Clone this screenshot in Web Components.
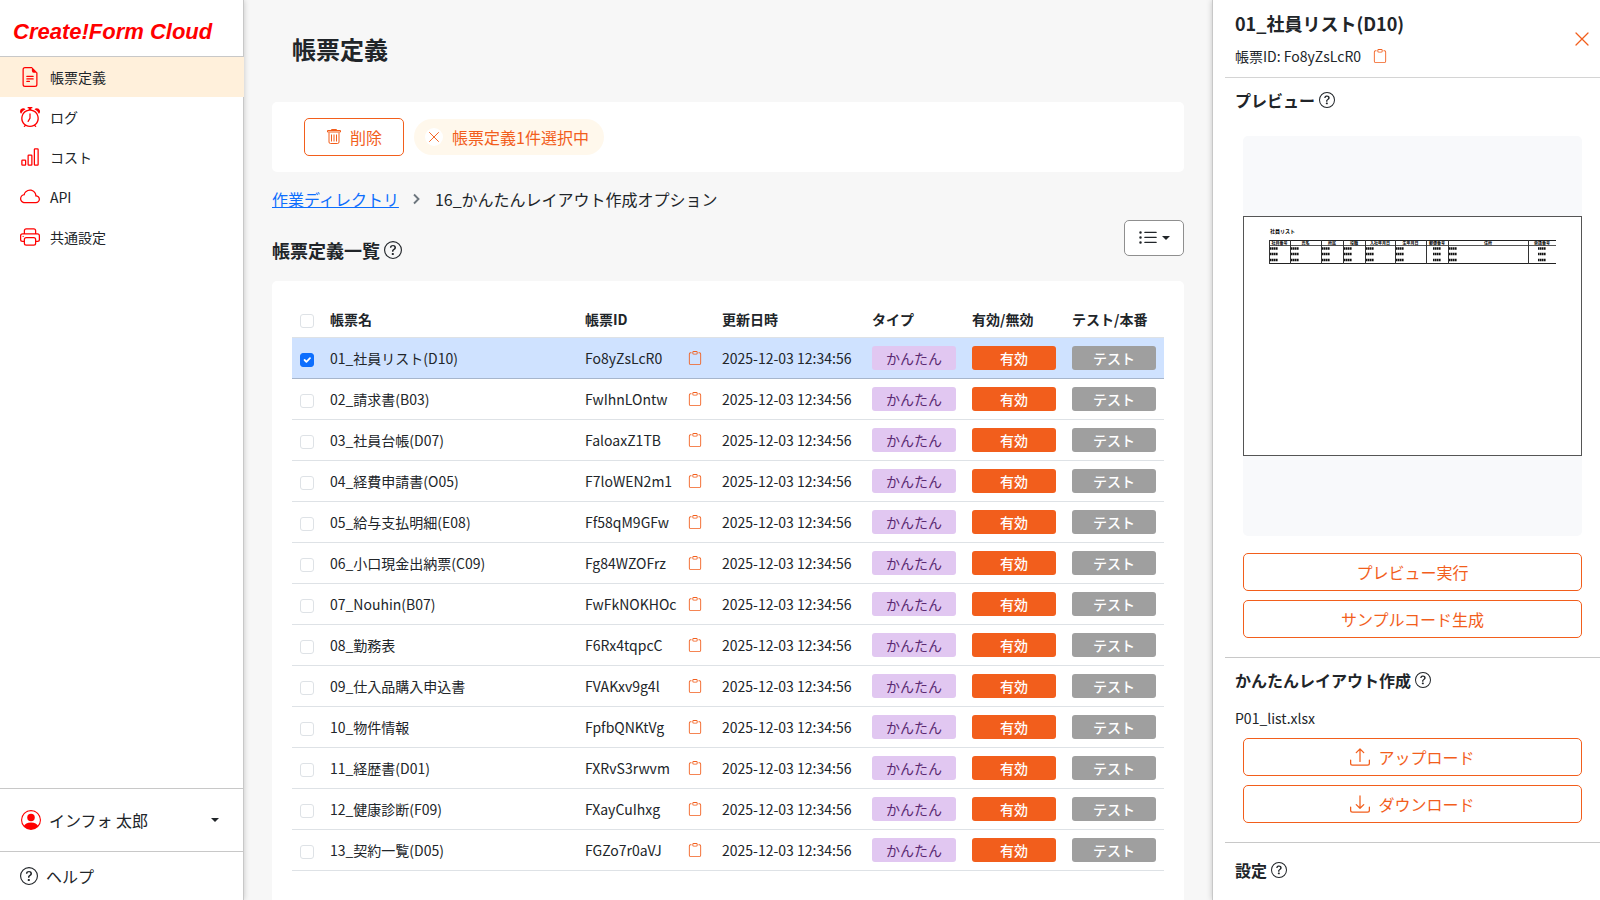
<!DOCTYPE html>
<html lang="ja">
<head>
<meta charset="utf-8">
<meta name="viewport" content="width=device-width, initial-scale=1">
<title>帳票定義 - Create!Form Cloud</title>
<style>
  html, body { margin: 0; height: 100%; }
  body {
    --accent: #f25e1c;
    --brand: #ff0000;
    --line: #c8c8c8;
    font-family: "Noto Sans CJK JP", "Noto Sans", sans-serif;
    font-size: 14px;
    line-height: 20px;
    color: #212529;
    background: #f7f7f7;
  }
</style>
</head>
<body>
<app-shell>
  <side-bar slot="side">
    <nav-item icon="file" active>帳票定義</nav-item>
    <nav-item icon="alarm">ログ</nav-item>
    <nav-item icon="chart">コスト</nav-item>
    <nav-item icon="cloud">API</nav-item>
    <nav-item icon="printer">共通設定</nav-item>
    <user-menu slot="foot">インフォ 太郎</user-menu>
    <help-link slot="foot">ヘルプ</help-link>
  </side-bar>
  <form-page slot="main"></form-page>
  <detail-panel slot="panel" name="01_社員リスト(D10)" form-id="Fo8yZsLcR0"></detail-panel>
</app-shell>

<script>
const ICONS = {
  file: '<path d="M5.5 7a.5.5 0 0 0 0 1h5a.5.5 0 0 0 0-1zM5 9.5a.5.5 0 0 1 .5-.5h5a.5.5 0 0 1 0 1h-5a.5.5 0 0 1-.5-.5m0 2a.5.5 0 0 1 .5-.5h2a.5.5 0 0 1 0 1h-2a.5.5 0 0 1-.5-.5"/><path d="M9.5 0H4a2 2 0 0 0-2 2v12a2 2 0 0 0 2 2h8a2 2 0 0 0 2-2V4.500zm0 1v2A1.5 1.5 0 0 0 11 4.500h2V14a1 1 0 0 1-1 1H4a1 1 0 0 1-1-1V2a1 1 0 0 1 1-1z"/>',
  alarm: '<path d="M8.5 5.5a.5.5 0 0 0-1 0v3.362l-1.429 2.38a.5.5 0 1 0 .858.515l1.5-2.5A.5.5 0 0 0 8.5 9z"/><path d="M6.5 0a.5.5 0 0 0 0 1H7v1.070a7.001 7.001 0 0 0-3.273 12.474l-.602.602a.5.5 0 0 0 .707.708l.746-.746A6.970 6.970 0 0 0 8 16a6.970 6.970 0 0 0 3.422-.892l.746.746a.5.5 0 0 0 .707-.708l-.601-.602A7.001 7.001 0 0 0 9 2.070V1h.5a.5.5 0 0 0 0-1zm1.038 3.018a6 6 0 0 1 .924 0 6 6 0 1 1-.924 0M0 3.500c0 .753.333 1.429.860 1.887A8.040 8.040 0 0 1 4.387 1.860 2.500 2.500 0 0 0 0 3.500M13.500 1c-.753 0-1.429.333-1.887.860a8.040 8.040 0 0 1 3.527 3.527A2.500 2.500 0 0 0 13.500 1"/>',
  chart: '<path d="M4 11H2v3h2zm5-4H7v7h2zm5-5v12h-2V2zm-2-1a1 1 0 0 0-1 1v12a1 1 0 0 0 1 1h2a1 1 0 0 0 1-1V2a1 1 0 0 0-1-1zM6 7a1 1 0 0 1 1-1h2a1 1 0 0 1 1 1v7a1 1 0 0 1-1 1H7a1 1 0 0 1-1-1zm-5 4a1 1 0 0 1 1-1h2a1 1 0 0 1 1 1v3a1 1 0 0 1-1 1H2a1 1 0 0 1-1-1z"/>',
  cloud: '<path d="M4.406 3.342A5.530 5.530 0 0 1 8 2c2.690 0 4.923 2 5.166 4.579C14.758 6.804 16 8.137 16 9.773 16 11.569 14.502 13 12.687 13H3.781C1.708 13 0 11.366 0 9.318c0-1.763 1.266-3.223 2.942-3.593.143-.863.698-1.723 1.464-2.383m.653.757c-.757.653-1.153 1.440-1.153 2.056v.448l-.445.049C2.064 6.805 1 7.952 1 9.318 1 10.785 2.230 12 3.781 12h8.906C13.980 12 15 10.988 15 9.773c0-1.216-1.020-2.228-2.313-2.228h-.5v-.5C12.188 4.825 10.328 3 8 3a4.530 4.530 0 0 0-2.941 1.100z"/>',
  printer: '<path d="M2.5 8a.5.5 0 1 0 0-1 .5.5 0 0 0 0 1"/><path d="M5 1a2 2 0 0 0-2 2v2H2a2 2 0 0 0-2 2v3a2 2 0 0 0 2 2h1v1a2 2 0 0 0 2 2h6a2 2 0 0 0 2-2v-1h1a2 2 0 0 0 2-2V7a2 2 0 0 0-2-2h-1V3a2 2 0 0 0-2-2zM4 3a1 1 0 0 1 1-1h6a1 1 0 0 1 1 1v2H4zm1 5a2 2 0 0 0-2 2v1H2a1 1 0 0 1-1-1V7a1 1 0 0 1 1-1h12a1 1 0 0 1 1 1v3a1 1 0 0 1-1 1h-1v-1a2 2 0 0 0-2-2zm7 2v3a1 1 0 0 1-1 1H5a1 1 0 0 1-1-1v-3a1 1 0 0 1 1-1h6a1 1 0 0 1 1 1"/>',
  person: '<path d="M11 6a3 3 0 1 1-6 0 3 3 0 0 1 6 0"/><path fill-rule="evenodd" d="M0 8a8 8 0 1 1 16 0A8 8 0 0 1 0 8m8-7a7 7 0 0 0-5.468 11.370C3.242 11.226 4.805 10 8 10s4.757 1.225 5.468 2.370A7 7 0 0 0 8 1"/>',
  help: '<path d="M8 15A7 7 0 1 1 8 1a7 7 0 0 1 0 14m0 1A8 8 0 1 0 8 0a8 8 0 0 0 0 16"/><path d="M5.255 5.786a.237.237 0 0 0 .241.247h.825c.138 0 .248-.113.266-.250.090-.656.540-1.134 1.342-1.134.686 0 1.314.343 1.314 1.168 0 .635-.374.927-.965 1.371-.673.489-1.206 1.060-1.168 1.987l.003.217a.250.250 0 0 0 .250.246h.811a.250.250 0 0 0 .250-.250v-.105c0-.718.273-.927 1.010-1.486.609-.463 1.244-.977 1.244-2.056 0-1.511-1.276-2.241-2.673-2.241-1.267 0-2.655.590-2.750 2.286m1.557 5.763c0 .533.425.927 1.010.927.609 0 1.028-.394 1.028-.927 0-.552-.420-.940-1.029-.940-.584 0-1.009.388-1.009.940"/>',
  clipboard: '<path d="M4 1.500H3a2 2 0 0 0-2 2V14a2 2 0 0 0 2 2h10a2 2 0 0 0 2-2V3.500a2 2 0 0 0-2-2h-1v1h1a1 1 0 0 1 1 1V14a1 1 0 0 1-1 1H3a1 1 0 0 1-1-1V3.500a1 1 0 0 1 1-1h1z"/><path d="M9.500 1a.5.5 0 0 1 .5.5v1a.5.5 0 0 1-.5.5h-3a.5.5 0 0 1-.5-.5v-1a.5.5 0 0 1 .5-.5zm-3-1A1.500 1.500 0 0 0 5 1.500v1A1.500 1.500 0 0 0 6.500 4h3A1.500 1.500 0 0 0 11 2.500v-1A1.500 1.500 0 0 0 9.500 0z"/>',
  list: '<path fill-rule="evenodd" d="M5 11.500a.5.5 0 0 1 .5-.5h9a.5.5 0 0 1 0 1h-9a.5.5 0 0 1-.5-.5m0-4a.5.5 0 0 1 .5-.5h9a.5.5 0 0 1 0 1h-9a.5.5 0 0 1-.5-.5m0-4a.5.5 0 0 1 .5-.5h9a.5.5 0 0 1 0 1h-9a.5.5 0 0 1-.5-.5m-3 1a1 1 0 1 0 0-2 1 1 0 0 0 0 2m0 4a1 1 0 1 0 0-2 1 1 0 0 0 0 2m0 4a1 1 0 1 0 0-2 1 1 0 0 0 0 2"/>',
  upload: '<path d="M.5 9.900a.5.5 0 0 1 .5.5v2.500a1 1 0 0 0 1 1h12a1 1 0 0 0 1-1v-2.500a.5.5 0 0 1 1 0v2.500a2 2 0 0 1-2 2H2a2 2 0 0 1-2-2v-2.500a.5.5 0 0 1 .5-.5"/><path d="M7.646 1.146a.5.5 0 0 1 .708 0l3 3a.5.5 0 0 1-.708.708L8.500 2.707V11.500a.5.5 0 0 1-1 0V2.707L5.354 4.854a.5.5 0 1 1-.708-.708z"/>',
  download: '<path d="M.5 9.900a.5.5 0 0 1 .5.5v2.500a1 1 0 0 0 1 1h12a1 1 0 0 0 1-1v-2.500a.5.5 0 0 1 1 0v2.500a2 2 0 0 1-2 2H2a2 2 0 0 1-2-2v-2.500a.5.5 0 0 1 .5-.5"/><path d="M7.646 11.854a.5.5 0 0 0 .708 0l3-3a.5.5 0 0 0-.708-.708L8.500 10.293V1.500a.5.5 0 0 0-1 0v8.793L5.354 8.146a.5.5 0 1 0-.708.708z"/>',
  trash: '<g fill="none" stroke="currentColor"><path d="M1.500 1.500h13v1.500h-13zM5.500 1.500v-1h5v1M3 3.500v9.500a1.500 1.500 0 0 0 1.500 1.500h7a1.500 1.500 0 0 0 1.500-1.500V3.500M5.500 5.500v7M8 5.500v7M10.500 5.500v7"/></g>',
  cross: '<path fill="none" stroke="currentColor" stroke-width="1.250" stroke-linecap="round" d="M2 2l12 12M14 2L2 14"/>',
  chevron: '<path fill="none" stroke="currentColor" stroke-width="2.500" d="M4 2l6 6-6 6"/>'
};

/* Defines an element whose shadow root is rendered from the given function. */
function define(tag, render) {
  customElements.define(tag, class extends HTMLElement {
    constructor() { super(); this.attachShadow({ mode: 'open' }); }
    connectedCallback() {
      const t = document.createElement('template');
      t.innerHTML = render(this);
      this.shadowRoot.replaceChildren(t.content.cloneNode(true));
    }
  });
}

define('ui-icon', el => `
  <style>
    :host { display: inline-flex; flex: none; width: var(--size, 16px); height: var(--size, 16px); }
    svg { width: 100%; height: 100%; display: block; }
  </style>
  <svg viewBox="0 0 16 16" fill="currentColor" aria-hidden="true">${ICONS[el.getAttribute('name')]}</svg>`);

define('app-shell', () => `
  <style>
    :host { display: grid; grid-template-columns: 244px minmax(0, 1fr) 388px; height: 100vh; overflow: hidden; }
    ::slotted(*) { min-width: 0; min-height: 0; }
  </style>
  <slot name="side"></slot><slot name="main"></slot><slot name="panel"></slot>`);

define('side-bar', () => `
  <style>
    :host { display: flex; flex-direction: column; background: #fff; border-right: 1px solid var(--line); box-shadow: 0 0 6px rgba(0,0,0,.2); z-index: 1; }
    .logo { display: flex; align-items: center; height: 57px; box-sizing: border-box; padding: 8px 0 0 13px; border-bottom: 1px solid var(--line);
      font: italic bold 22px/24px "Liberation Sans", Arial, sans-serif; color: var(--brand); text-decoration: none; white-space: nowrap; }
    nav { flex: 1; margin-right: -1px; }
  </style>
  <a class="logo" href="#">Create!Form Cloud</a>
  <nav><slot></slot></nav>
  <slot name="foot"></slot>`);

define('nav-item', el => `
  <style>
    :host { display: block; }
    a { display: flex; align-items: center; gap: 10px; height: 40px; padding: 0 20px; color: inherit; text-decoration: none; }
    :host([active]) a { background: #fff0db; }
    ui-icon { --size: 20px; color: var(--brand); }
  </style>
  <a href="#"><ui-icon name="${el.getAttribute('icon')}"></ui-icon><slot></slot></a>`);

define('user-menu', () => `
  <style>
    :host { display: block; border-top: 1px solid var(--line); }
    button { display: flex; align-items: center; gap: 8px; width: 100%; height: 62px; padding: 0 24px 0 21px; border: 0; background: none; font: inherit; font-size: 16px; color: inherit; }
    ui-icon { --size: 20px; color: var(--brand); }
    i { margin-left: auto; border: 4px solid transparent; border-top-color: currentColor; border-bottom: 0; }
  </style>
  <button type="button"><ui-icon name="person"></ui-icon><slot></slot><i></i></button>`);

define('help-link', () => `
  <style>
    :host { display: block; border-top: 1px solid var(--line); }
    a { display: flex; align-items: center; gap: 8px; height: 48px; padding: 0 20px; font-size: 16px; color: inherit; text-decoration: none; }
    ui-icon { --size: 18px; }
  </style>
  <a href="#"><ui-icon name="help"></ui-icon><slot></slot></a>`);

define('outline-button', el => `
  <style>
    :host { display: block; }
    button { display: flex; align-items: center; justify-content: center; gap: 8px; width: 100%; height: 38px; padding: 0 20px; border: 1px solid var(--accent); border-radius: 5px; background: #fff; color: var(--accent); font: inherit; font-size: 16px; line-height: 24px; white-space: nowrap; }
  </style>
  <button type="button">${el.hasAttribute('icon') ? `<ui-icon name="${el.getAttribute('icon')}"></ui-icon>` : ''}<slot></slot></button>`);

define('copy-button', () => `
  <style>
    :host { display: inline-flex; }
    button { display: flex; padding: 0; border: 0; background: none; color: var(--accent); }
    ui-icon { --size: 14px; }
  </style>
  <button type="button" aria-label="コピー"><ui-icon name="clipboard"></ui-icon></button>`);

define('help-heading', () => `
  <style>
    :host { display: block; }
    h2 { display: flex; align-items: center; gap: 4px; margin: 0; font-size: inherit; line-height: 24px; font-weight: bold; }
    ui-icon { --size: 1em; }
  </style>
  <h2><slot></slot><ui-icon name="help"></ui-icon></h2>`);

define('selection-chip', () => `
  <style>
    :host { display: flex; align-items: center; gap: 9px; height: 36px; padding: 0 15px 0 11px; border-radius: 18px; background: #fff8ec; color: var(--accent); font-size: 16px; line-height: 24px; }
    button { display: grid; place-items: center; width: 18px; height: 18px; padding: 0; border: 0; border-radius: 9px; background: #fff; color: inherit; }
    ui-icon { --size: 12px; }
  </style>
  <button type="button" aria-label="選択解除"><ui-icon name="cross"></ui-icon></button><span><slot></slot></span>`);

const FORMS = [
  ['01_社員リスト(D10)', 'Fo8yZsLcR0'],
  ['02_請求書(B03)', 'FwIhnLOntw'],
  ['03_社員台帳(D07)', 'FaloaxZ1TB'],
  ['04_経費申請書(O05)', 'F7loWEN2m1'],
  ['05_給与支払明細(E08)', 'Ff58qM9GFw'],
  ['06_小口現金出納票(C09)', 'Fg84WZOFrz'],
  ['07_Nouhin(B07)', 'FwFkNOKHOc'],
  ['08_勤務表', 'F6Rx4tqpcC'],
  ['09_仕入品購入申込書', 'FVAKxv9g4l'],
  ['10_物件情報', 'FpfbQNKtVg'],
  ['11_経歴書(D01)', 'FXRvS3rwvm'],
  ['12_健康診断(F09)', 'FXayCuIhxg'],
  ['13_契約一覧(D05)', 'FGZo7r0aVJ']
];

define('form-table', () => `
  <style>
    :host { display: block; }
    table { width: 100%; table-layout: fixed; border-collapse: separate; border-spacing: 0; }
    th, td { height: 40px; padding: 0 8px; border-bottom: 1px solid #dee2e6; text-align: left; white-space: nowrap; }
    th { height: 36px; font-weight: bold; }
    tr.on td { background: #cfe2ff; border-bottom-color: #a6b5cc; }
    .check { width: 14px; } .id { width: 121px; } .date { width: 134px; } .tag { width: 84px; }
    input { display: block; appearance: none; width: 14px; height: 14px; margin: 4px 0 0; border: 1px solid #dee2e6; border-radius: 3px; background: #fff; }
    input:checked { border-color: #0d6efd; background: #0d6efd url("data:image/svg+xml,%3Csvg xmlns='http://www.w3.org/2000/svg' viewBox='0 0 20 20'%3E%3Cpath fill='none' stroke='%23fff' stroke-linecap='round' stroke-linejoin='round' stroke-width='3' d='m6 10 3 3 6-6'/%3E%3C/svg%3E") center / contain; }
    .pair { display: flex; align-items: center; justify-content: space-between; padding-right: 4px; }
    .badge { display: block; height: 24px; line-height: 24px; border-radius: 3px; text-align: center; font-weight: 500; color: #fff; }
    .easy { background: #e1c7f1; color: #5b2a72; font-weight: 400; }
    .live { background: var(--accent); }
    .test { background: #9f9f9f; }
  </style>
  <table>
    <thead><tr>
      <th class="check"><input type="checkbox" aria-label="すべて選択"></th>
      <th>帳票名</th><th class="id">帳票ID</th><th class="date">更新日時</th>
      <th class="tag">タイプ</th><th class="tag">有効/無効</th><th class="tag">テスト/本番</th>
    </tr></thead>
    <tbody>${FORMS.map(([name, id], i) => `
      <tr class="${i ? '' : 'on'}">
        <td><input type="checkbox" aria-label="${name}" ${i ? '' : 'checked'}></td>
        <td>${name}</td>
        <td><div class="pair"><span>${id}</span><copy-button></copy-button></div></td>
        <td>2025-12-03 12:34:56</td>
        <td><span class="badge easy">かんたん</span></td>
        <td><span class="badge live">有効</span></td>
        <td><span class="badge test">テスト</span></td>
      </tr>`).join('')}
    </tbody>
  </table>`);

define('form-page', () => `
  <style>
    :host { display: block; padding: 0 28px; overflow-y: auto; scrollbar-width: none; }
    h1 { margin: 0; padding: 31px 20px 35px; font-size: 24px; line-height: 36px; }
    .bar { display: flex; align-items: center; gap: 10px; padding: 16px 32px; border-radius: 5px; background: #fff; }
    .bar outline-button { width: 100px; }
    .crumbs { display: flex; align-items: center; gap: 12px; margin-top: 15px; font-size: 16px; line-height: 24px; }
    .crumbs a { color: #0d6efd; }
    .crumbs ui-icon { --size: 12px; color: #6c757d; }
    .head { display: flex; align-items: flex-start; justify-content: space-between; margin-top: 9px; }
    help-heading { padding-top: 18px; font-size: 18px; }
    .view { display: flex; align-items: center; justify-content: center; gap: 4px; width: 60px; height: 36px; padding: 0; border: 1px solid #8f8f8f; border-radius: 5px; background: #fff; color: #212529; }
    .view ui-icon { --size: 20px; }
    .view i { border: 4px solid transparent; border-top-color: currentColor; border-bottom: 0; }
    .card { margin-top: 19px; padding: 20px 20px 40px; border-radius: 5px; background: #fff; }
  </style>
  <h1>帳票定義</h1>
  <div class="bar"><outline-button icon="trash">削除</outline-button><selection-chip>帳票定義1件選択中</selection-chip></div>
  <nav class="crumbs"><a href="#">作業ディレクトリ</a><ui-icon name="chevron"></ui-icon><span>16_かんたんレイアウト作成オプション</span></nav>
  <div class="head">
    <help-heading>帳票定義一覧</help-heading>
    <button class="view" type="button" aria-label="表示切替"><ui-icon name="list"></ui-icon><i></i></button>
  </div>
  <div class="card"><form-table></form-table></div>`);

/* Thumbnail of the first page of the form: title, header row and three data rows. */
const COLS = [
  [25, 46, '社員番号'], [46, 77, '氏名'], [77, 99, '所属'], [99, 121, '役職'], [121, 151, '入社年月日'],
  [151, 182, '生年月日'], [182, 204, '郵便番号'], [204, 284, '住所'], [284, 312, '電話番号']
];
define('page-preview', () => `
  <style>
    :host { display: flex; align-items: center; height: 400px; border-radius: 5px; background: #f8f9fb; }
    svg { display: block; width: 100%; box-sizing: border-box; border: 1px solid #555; background: #fff; }
    text { font: bold 4px "Noto Sans CJK JP", sans-serif; fill: #000; }
    .title { font-size: 5px; }
  </style>
  <svg viewBox="0 0 337 238" role="img" aria-label="プレビュー">
    <text class="title" x="26" y="16">社員リスト</text>
    <path d="M25 23.500H312M25 46.500H312" stroke="#222" fill="none"/>
    <path d="M25 28.500H312" stroke="#555" fill="none"/>
    <path d="${COLS.map(c => `M${c[0] + .5} 23V47`).join('')}" stroke="#333" fill="none"/>
    ${COLS.map(([a, b, t]) => `<text x="${(a + b) / 2}" y="27.500" text-anchor="middle">${t}</text>`).join('')}
    ${[31.5, 37, 43].map(y => COLS.map(([a, b], i) => {
      const x = i === 6 || i === 8 ? (a + b) / 2 - 4 : a + 1;
      return `<path d="M${x} ${y}h8" stroke="#111" stroke-width="2.600" stroke-dasharray="1.600 .4"/>`;
    }).join('')).join('')}
  </svg>`);

define('detail-panel', el => `
  <style>
    :host { display: block; box-sizing: border-box; padding-left: 12px; background: #fff; border-left: 1px solid var(--line); box-shadow: 0 0 6px rgba(0,0,0,.2); overflow-y: auto; scrollbar-width: none; z-index: 1; }
    header { display: flex; align-items: center; justify-content: space-between; height: 78px; box-sizing: border-box; padding: 0 10px; border-bottom: 1px solid #d4d4d4; }
    h1 { margin: 0; padding-top: 2px; font-size: 18px; line-height: 28px; }
    .id { display: flex; align-items: center; gap: 12px; margin-top: 9px; line-height: 20px; padding-bottom: 4px; }
    .close { display: flex; padding: 0; border: 0; background: none; color: var(--accent); }
    section { padding: 10px 18px 19px; border-bottom: 1px solid var(--line); }
    section:last-child { border: 0; padding-top: 15px; }
    help-heading { margin-left: -8px; font-size: 16px; }
    page-preview { margin: 24px 0 17px; }
    outline-button { --size: 20px; }
    outline-button + outline-button { margin-top: 9px; }
    p { margin: 16px 0 10px -8px; line-height: 20px; }
  </style>
  <header>
    <div><h1>${el.getAttribute('name')}</h1><div class="id"><span>帳票ID: ${el.getAttribute('form-id')}</span><copy-button></copy-button></div></div>
    <button class="close" type="button" aria-label="閉じる"><ui-icon name="cross"></ui-icon></button>
  </header>
  <section>
    <help-heading>プレビュー</help-heading>
    <page-preview></page-preview>
    <outline-button>プレビュー実行</outline-button>
    <outline-button>サンプルコード生成</outline-button>
  </section>
  <section>
    <help-heading>かんたんレイアウト作成</help-heading>
    <p>P01_list.xlsx</p>
    <outline-button icon="upload">アップロード</outline-button>
    <outline-button icon="download">ダウンロード</outline-button>
  </section>
  <section><help-heading>設定</help-heading></section>`);
</script>
</body>
</html>
